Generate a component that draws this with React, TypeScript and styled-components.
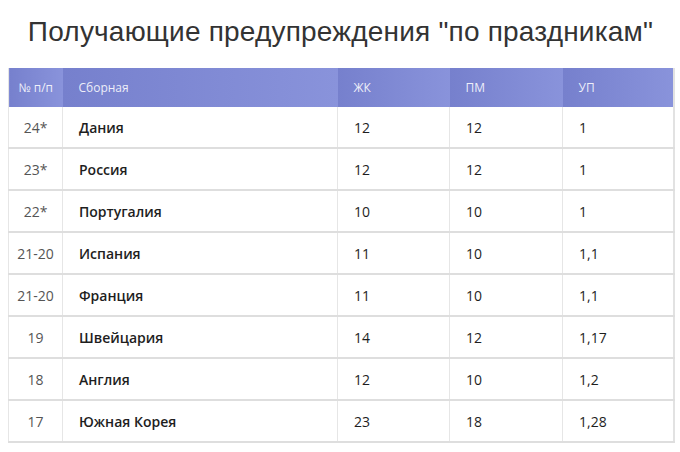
import React from 'react';
import styled, { createGlobalStyle } from 'styled-components';

const GlobalStyle = createGlobalStyle`
  body {
    margin: 0;
    background: #fff;
    font-family: "Open Sans", "Noto Sans", sans-serif;
  }
`;

const Page = styled.div`
  width: 680px;
  padding: 18px 7px 0 8px;
  box-sizing: border-box;
`;

const Title = styled.h1`
  margin: 0 0 22px;
  font-family: "Liberation Sans", Arial, sans-serif;
  font-weight: 400;
  font-size: 28px;
  line-height: 28px;
  color: #333;
  text-align: center;
  letter-spacing: 0.2px;
`;

const Table = styled.table`
  width: 665px;
  border-collapse: collapse;
  table-layout: fixed;
  border-left: 1px solid #e4e4e4;
  border-right: 2px solid #e2e2e2;
`;

const HeadCell = styled.th<{ $center?: boolean }>`
  height: 39px;
  padding: 0 0 0 ${(p) => (p.$center ? 0 : 16)}px;
  text-align: ${(p) => (p.$center ? 'center' : 'left')};
  font-size: 12px;
  font-weight: 400;
  color: rgba(255, 255, 255, 0.88);
  background: linear-gradient(to right, #7680cd, #8993db);
`;

const Row = styled.tr`
  border-bottom: 2px solid #dedede;
`;

const Cell = styled.td<{ $center?: boolean; $bold?: boolean }>`
  height: 40px;
  padding: 0 0 0 ${(p) => (p.$center ? 0 : 16)}px;
  text-align: ${(p) => (p.$center ? 'center' : 'left')};
  border-left: 1px solid #e6e6e6;
  font-size: 14px;
  font-weight: ${(p) => (p.$bold ? 600 : 400)};
  color: ${(p) => (p.$center ? '#555' : '#1e1e1e')};
`;

const columns = [
  { title: '№ п/п', width: 54 },
  { title: 'Сборная', width: 275 },
  { title: 'ЖК', width: 112 },
  { title: 'ПМ', width: 113 },
  { title: 'УП', width: 111 },
];

const teams = [
  ['24*', 'Дания', '12', '12', '1'],
  ['23*', 'Россия', '12', '12', '1'],
  ['22*', 'Португалия', '10', '10', '1'],
  ['21-20', 'Испания', '11', '10', '1,1'],
  ['21-20', 'Франция', '11', '10', '1,1'],
  ['19', 'Швейцария', '14', '12', '1,17'],
  ['18', 'Англия', '12', '10', '1,2'],
  ['17', 'Южная Корея', '23', '18', '1,28'],
];

const App = () => {
  return (
    <Page>
      <GlobalStyle />
      <Title>Получающие предупреждения "по праздникам"</Title>
      <Table>
        <colgroup>
          {columns.map((c) => (
            <col key={c.title} style={{ width: c.width }} />
          ))}
        </colgroup>
        <thead>
          <tr>
            {columns.map((c, i) => (
              <HeadCell key={c.title} $center={i === 0}>
                {c.title}
              </HeadCell>
            ))}
          </tr>
        </thead>
        <tbody>
          {teams.map((t, index) => (
            <Row key={index}>
              {t.map((v, i) => (
                <Cell key={i} $center={i === 0} $bold={i === 1}>
                  {v}
                </Cell>
              ))}
            </Row>
          ))}
        </tbody>
      </Table>
    </Page>
  );
};

export default App;
